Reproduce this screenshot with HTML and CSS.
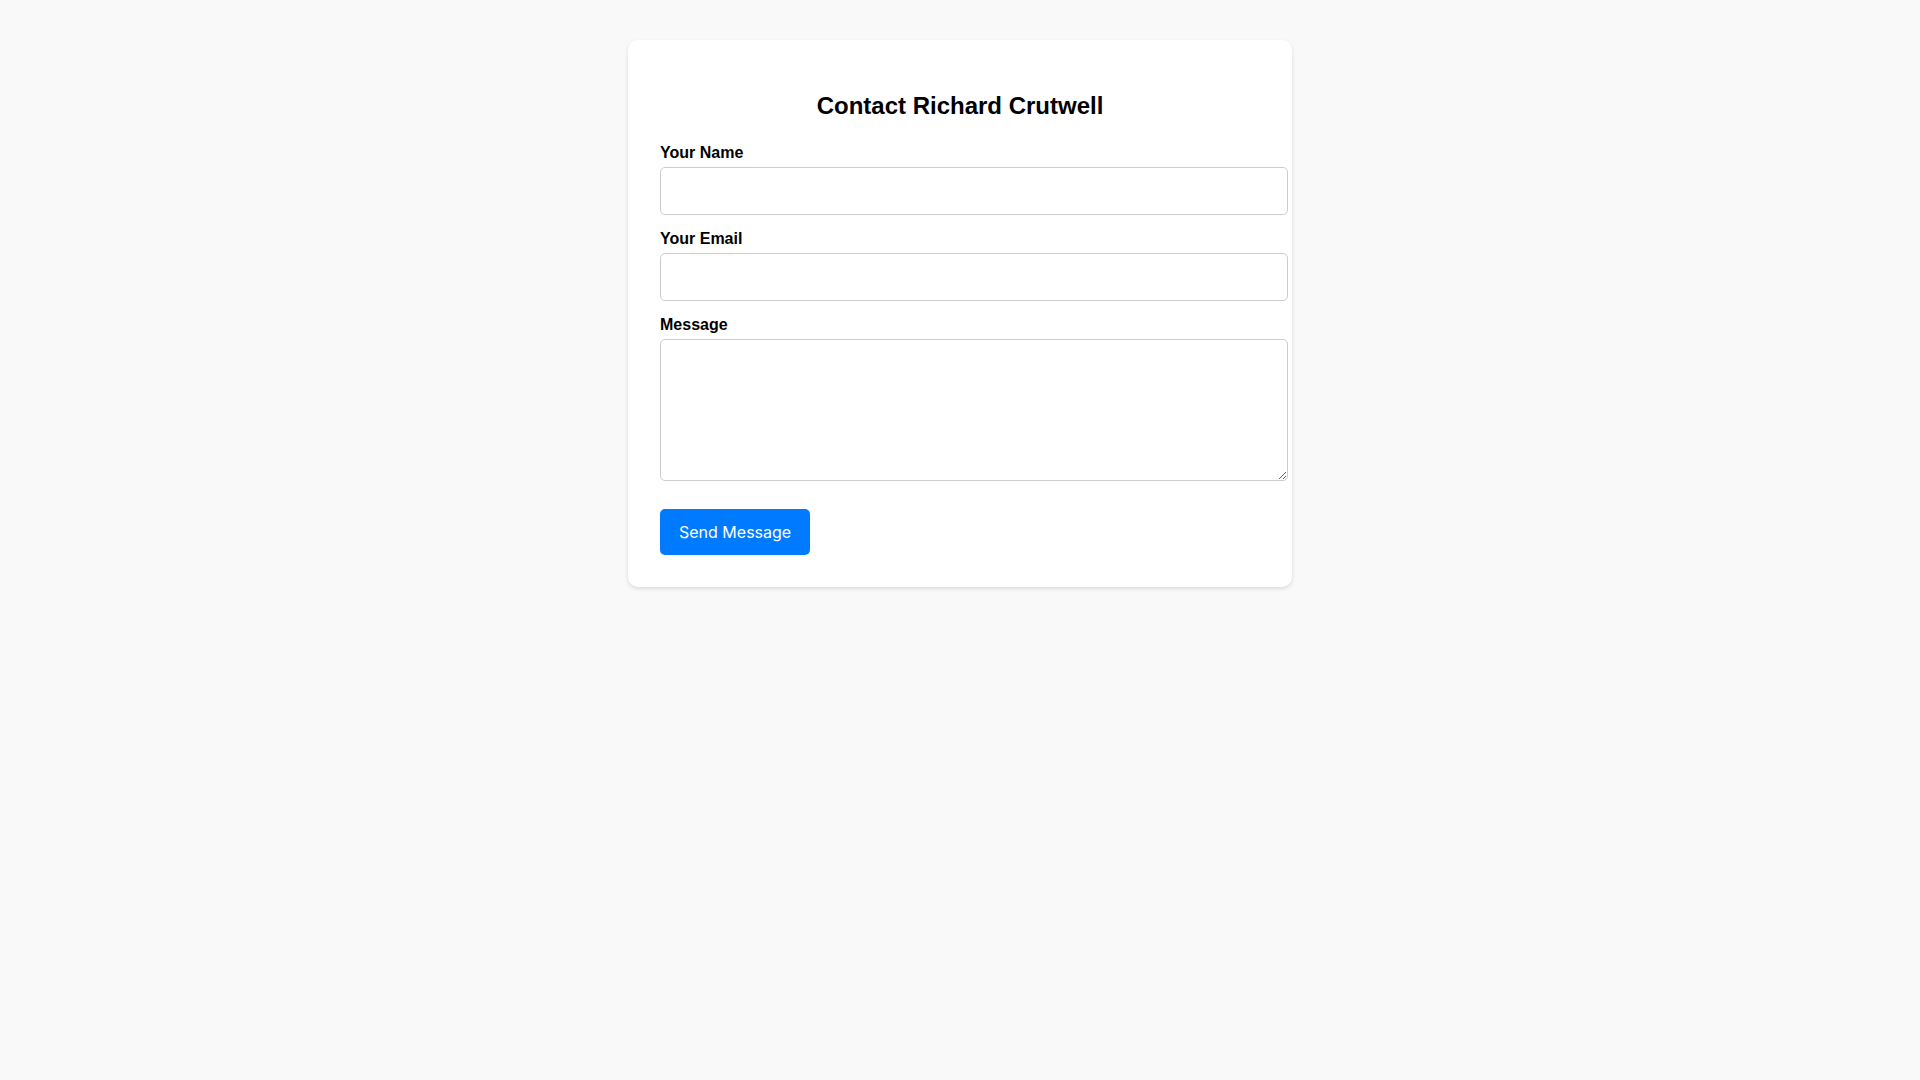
FILE: index.html
```html
<!DOCTYPE html>
<html>

<head>
    <title>Contact Richard Crutwell</title>
    <link rel="stylesheet" href="styles.css">
</head>

<body>
    <div class="container">
        <h2>Contact Richard Crutwell</h2>
        <form>
            <div class="form-group">
                <label for="name">Your Name</label>
                <input type="text" id="name">
            </div>

            <div class="form-group">
                <label for="email">Your Email</label>
                <input type="email" id="email">
            </div>

            <div class="form-group">
                <label for="message">Message</label>
                <textarea id="message"></textarea>
            </div>

            <button type="submit" class="send-btn">Send Message</button>
        </form>
    </div>
</body>

</html>
```

FILE: styles.css
```css
body {
    font-family: "Liberation Sans", Arial, sans-serif;
    background-color: #f9f9f9;
    margin: 0;
    padding: 40px 0;
}

.container {
    max-width: 600px;
    margin: 0 auto;
    padding: 32px 32px 32px;
    background-color: #ffffff;
    border-radius: 10px;
    box-shadow: 0 2px 4px rgba(0, 0, 0, 0.12);
}

h2 {
    text-align: center;
    font-size: 24px;
    margin: 20px 0 24px;
}

.form-group {
    margin-bottom: 15px;
}

.form-group label {
    display: block;
    font-weight: bold;
    font-size: 16px;
    margin-bottom: 5px;
}

.form-group input,
.form-group textarea {
    display: block;
    width: 100%;
    padding: 14px 13px;
    font-size: 16px;
    font-family: inherit;
    border: 1px solid #ccc;
    border-radius: 5px;
}

.form-group textarea {
    height: 112px;
}

.send-btn {
    margin-top: 13px;
    background-color: #007bff;
    color: white;
    font-family: Inter, sans-serif;
    font-size: 16px;
    padding: 13px 19px;
    border: none;
    border-radius: 5px;
    cursor: pointer;
}
```
